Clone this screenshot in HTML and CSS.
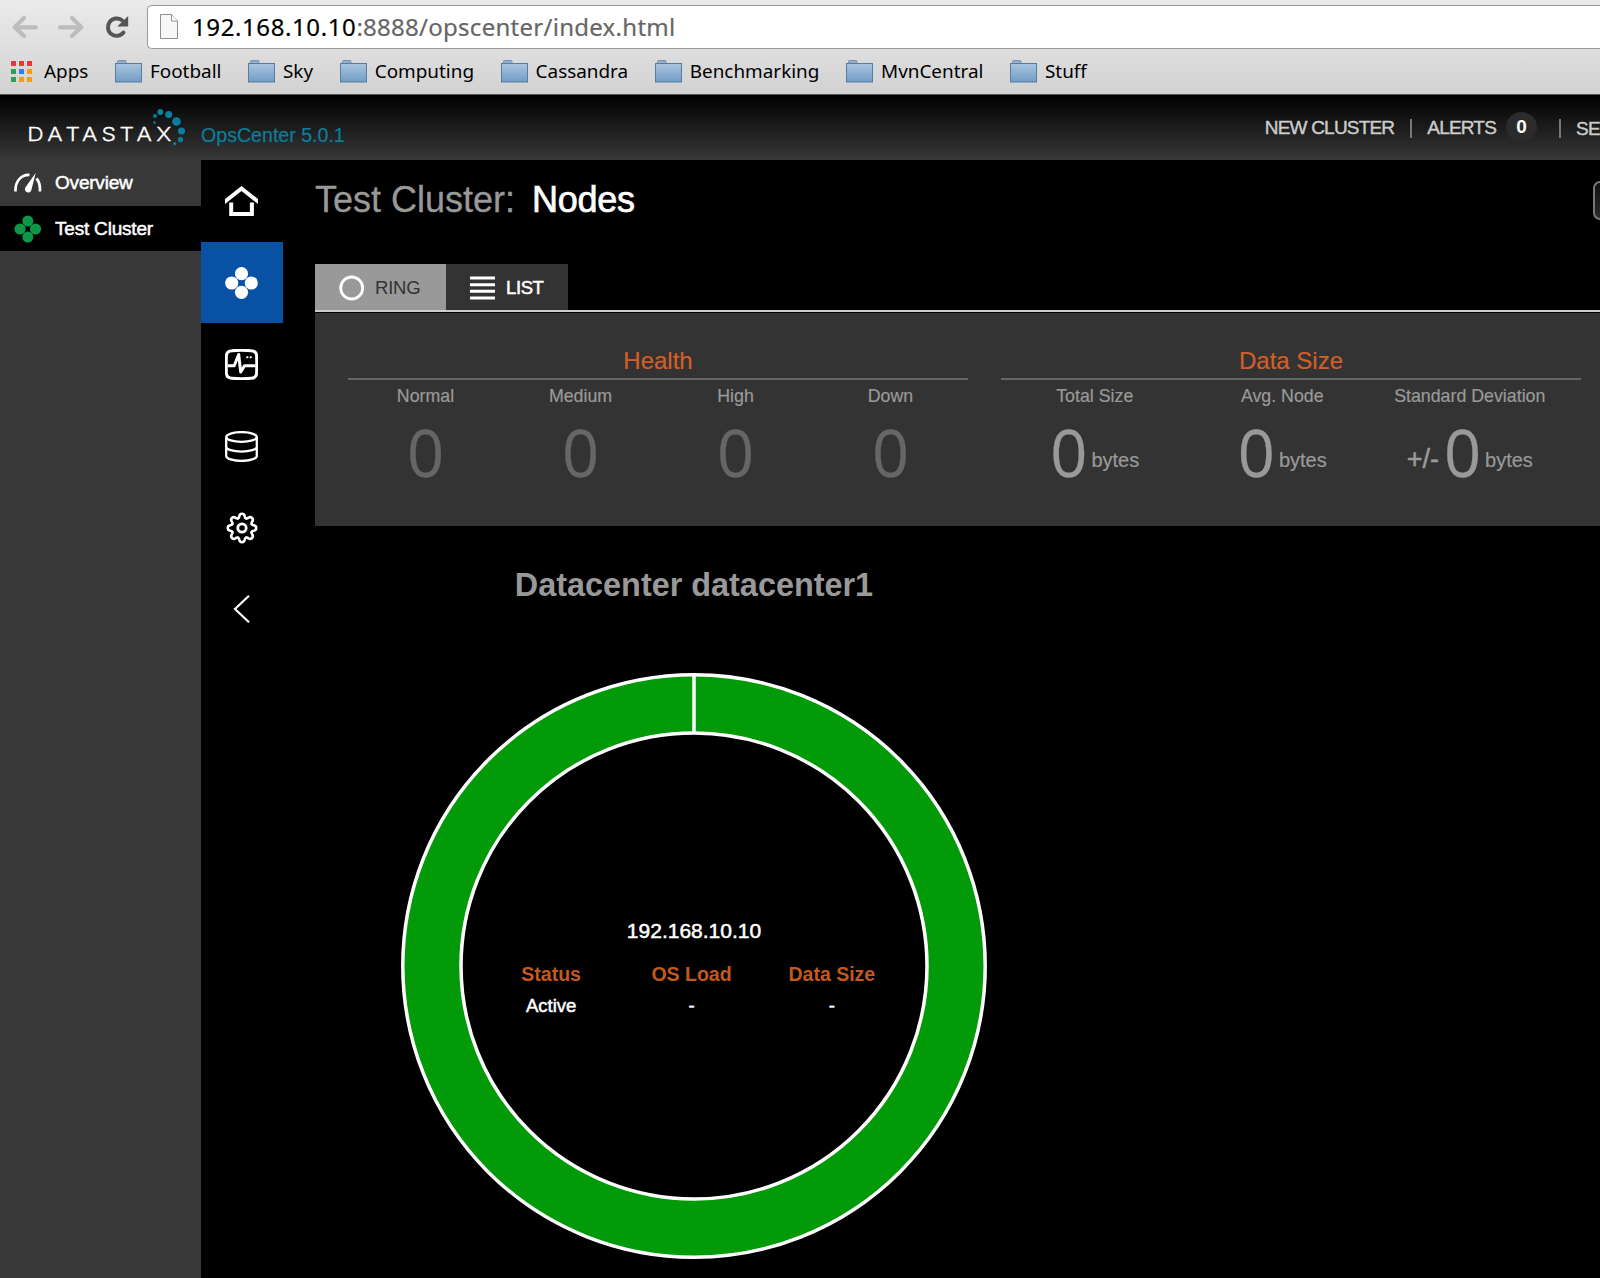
FILE: index.html
```html
<!DOCTYPE html>
<html lang="en">
<head>
    <meta charset="UTF-8">
    <meta name="viewport" content="width=device-width, initial-scale=1.0">
    <title>OpsCenter</title>
    <link rel="stylesheet" href="styles.css">
</head>
<body>
    <svg width="0" height="0" class="defs">
        <defs>
            <linearGradient id="folder-fill" x1="0" y1="0" x2="0" y2="1">
                <stop offset="0" stop-color="#a9c5e0"/>
                <stop offset="1" stop-color="#729cc4"/>
            </linearGradient>
            <symbol id="folder" viewBox="0 0 27 24">
                <path d="M2.500 4V1.500q0-1 1-1h6.500q1 0 1 1V4" fill="#8fb0d2" stroke="#7c92ac"/>
                <rect x=".5" y="3.500" width="26" height="18.500" fill="url(#folder-fill)" stroke="#587c9e"/>
            </symbol>
            <path id="tooth" d="M-4-9.700Q-2.800-10.200-2.700-11.700Q-2.400-14.200 0-14.200Q2.400-14.200 2.700-11.700Q2.800-10.200 4-9.700"/>
        </defs>
    </svg>

    <div class="browser">
        <div class="toolbar">
            <svg class="tool-icons" width="147" height="54" viewBox="0 0 147 54">
                <g fill="none" stroke="#bdbdbd" stroke-width="4.200" stroke-linecap="round" stroke-linejoin="round">
                    <path d="M36 27.300H15M24 18l-9.300 9.300L24 36"/>
                    <path d="M60 27.300h21M72 18l9.300 9.300L72 36"/>
                </g>
                <path d="M123.500 32.500A8.700 8.700 0 1 1 122 20.300" fill="none" stroke="#555" stroke-width="3.900" stroke-linecap="round"/>
                <path d="M128.200 16v10.500h-11z" fill="#555"/>
            </svg>
            <div class="url-box">
                <svg width="20" height="28" viewBox="0 0 20 28">
                    <path d="M1.500 1.500h11l6 6.500v17.500h-17z" fill="#f7f7f7" stroke="#8f8f8f"/>
                    <path d="M12.500 1.500V8h6" fill="#fff" stroke="#8f8f8f"/>
                </svg>
                <p class="url"><b>192.168.10.10</b>:8888/opscenter/index.html</p>
            </div>
        </div>
        <ul class="bookmarks">
            <li class="apps">
                <svg width="22" height="22" viewBox="0 0 22 22">
                    <path d="M0 0h5v5H0zM8 0h5v5H8zM16 0h5v5h-5z" fill="#ee3535"/>
                    <path d="M0 8h5v5H0zM0 16h5v5H0z" fill="#2f9e52"/>
                    <path d="M8 8h5v5H8z" fill="#2185ee"/>
                    <path d="M16 8h5v5h-5zM8 16h5v5H8zM16 16h5v5h-5z" fill="#f29d18"/>
                </svg>
                <span>Apps</span>
            </li>
            <li><svg width="27" height="24"><use href="#folder"/></svg><span>Football</span></li>
            <li><svg width="27" height="24"><use href="#folder"/></svg><span>Sky</span></li>
            <li><svg width="27" height="24"><use href="#folder"/></svg><span>Computing</span></li>
            <li><svg width="27" height="24"><use href="#folder"/></svg><span>Cassandra</span></li>
            <li><svg width="27" height="24"><use href="#folder"/></svg><span>Benchmarking</span></li>
            <li><svg width="27" height="24"><use href="#folder"/></svg><span>MvnCentral</span></li>
            <li><svg width="27" height="24"><use href="#folder"/></svg><span>Stuff</span></li>
        </ul>
    </div>

    <div class="header">
        <svg class="logo" width="201" height="65" viewBox="0 95 201 65">
            <text class="logo-text" transform="scale(1.2 1)" y="141" x="22.800 39.300 54.600 68.300 84.600 99.600 113.800 130.300">DATASTAX</text>
            <g fill="#097f9b">
                <circle cx="154.500" cy="122.500" r="1.300"/>
                <circle cx="155" cy="116" r="1.900"/>
                <circle cx="160.300" cy="112" r="2.900"/>
                <circle cx="168.700" cy="114.500" r="3.500"/>
                <circle cx="176.500" cy="121.500" r="4.300"/>
                <circle cx="181.500" cy="131" r="3.500"/>
                <circle cx="180.500" cy="139.700" r="2.600"/>
                <circle cx="174.700" cy="143.600" r="1.600"/>
            </g>
        </svg>
        <span class="version">OpsCenter 5.0.1</span>
        <div class="menu">
            <span class="new-cluster">NEW CLUSTER</span>
            <i class="sep"></i>
            <span class="alerts">ALERTS</span>
            <b class="badge">0</b>
            <i class="sep"></i>
            <span class="settings">SETTINGS</span>
        </div>
    </div>

    <div class="page">
        <ul class="sidebar">
            <li>
                <svg width="28" height="28" viewBox="0 0 28 28">
                    <path d="M1.500 22.500C1 13 6.500 5.500 15.500 5.800M22.500 9.500c2.800 3.200 3.800 7.500 3.400 13" fill="none" stroke="#fff" stroke-width="2.700"/>
                    <path d="M21.800 3.800L17.500 20.500a3.300 3.300 0 1 1-6-2.200z" fill="#fff"/>
                </svg>
                <span>Overview</span>
            </li>
            <li class="active">
                <svg width="28" height="28" viewBox="0 0 28 28" fill="#109648">
                    <circle cx="13.800" cy="6" r="5.500"/>
                    <circle cx="6" cy="14" r="5.600"/>
                    <circle cx="21.500" cy="14" r="5.600"/>
                    <circle cx="13.800" cy="22" r="5.500"/>
                </svg>
                <span>Test Cluster</span>
            </li>
        </ul>

        <ul class="nav">
            <li class="home">
                <svg width="33" height="31" viewBox="0 0 33 31">
                    <path d="M0 13L16.500 0 33 13v5L16.500 5 0 18z" fill="#fff"/>
                    <path d="M6.200 16.500v11.600h20.700V16.500" fill="none" stroke="#fff" stroke-width="4"/>
                </svg>
            </li>
            <li class="active">
                <svg width="33" height="32" viewBox="0 0 33 32" fill="#fff">
                    <circle cx="16.500" cy="6.700" r="6.600"/>
                    <circle cx="6.700" cy="16" r="6.600"/>
                    <circle cx="26.300" cy="16" r="6.600"/>
                    <circle cx="16.500" cy="25.300" r="6.600"/>
                </svg>
            </li>
            <li>
                <svg width="33" height="31" viewBox="0 0 33 31" fill="none" stroke="#fff" stroke-width="3">
                    <path d="M7 1.700q9.500-.8 19 0 5.300.3 5.600 5 .3 8.800 0 17.600-.3 4.700-5.600 5-9.500.8-19 0-5.300-.3-5.600-5-.3-8.800 0-17.600.3-4.700 5.600-5z"/>
                    <path d="M2.500 16.700h6.700L13.700 5.500l2 17.500 3.800-6.300h11" stroke-linejoin="round"/>
                    <path d="M21.300 8.300h2M24.700 8.300h2" stroke-width="2"/>
                </svg>
            </li>
            <li class="storage">
                <svg width="33" height="31" viewBox="0 0 33 31" fill="none" stroke="#fff" stroke-width="2.300">
                    <ellipse cx="16.500" cy="6" rx="15.300" ry="4.900"/>
                    <path d="M1.200 6v19c0 2.700 6.800 4.900 15.300 4.900s15.300-2.200 15.300-4.900V6M1.200 15.700c0 2.700 6.800 4.900 15.300 4.900s15.300-2.200 15.300-4.900"/>
                </svg>
            </li>
            <li>
                <svg width="33" height="32" viewBox="-17 -16 33 32" fill="none" stroke="#fff" stroke-width="2.600" stroke-linecap="round">
                    <use href="#tooth"/>
                    <use href="#tooth" transform="rotate(45)"/>
                    <use href="#tooth" transform="rotate(90)"/>
                    <use href="#tooth" transform="rotate(135)"/>
                    <use href="#tooth" transform="rotate(180)"/>
                    <use href="#tooth" transform="rotate(225)"/>
                    <use href="#tooth" transform="rotate(270)"/>
                    <use href="#tooth" transform="rotate(315)"/>
                    <circle r="4.200" stroke-width="2.800"/>
                </svg>
            </li>
            <li>
                <svg width="33" height="30" viewBox="0 0 33 30">
                    <path d="M24 1.800L10 15l14 13.200" fill="none" stroke="#fff" stroke-width="2.200"/>
                </svg>
            </li>
        </ul>

        <div class="content">
            <div class="title-row">
                <h1>Test Cluster: <strong>Nodes</strong></h1>
                <span class="action-btn"></span>
            </div>

            <div class="tabs">
                <div class="tab tab-ring">
                    <svg width="26" height="26" viewBox="0 0 26 26"><circle cx="12.700" cy="13" r="11" fill="none" stroke="#fff" stroke-width="2.800"/></svg>
                    <span>RING</span>
                </div>
                <div class="tab tab-list">
                    <svg width="25" height="24" viewBox="0 0 25 24"><path d="M0 2h25M0 8.700h25M0 15.300h25M0 22h25" stroke="#fff" stroke-width="3"/></svg>
                    <span>LIST</span>
                </div>
            </div>

            <div class="stats">
                <div class="group health">
                    <h2>Health</h2>
                    <div class="cols">
                        <div class="col"><p>Normal</p><div class="value"><b>0</b></div></div>
                        <div class="col"><p>Medium</p><div class="value"><b>0</b></div></div>
                        <div class="col"><p>High</p><div class="value"><b>0</b></div></div>
                        <div class="col"><p>Down</p><div class="value"><b>0</b></div></div>
                    </div>
                </div>
                <div class="group data-size">
                    <h2>Data Size</h2>
                    <div class="cols">
                        <div class="col"><p>Total Size</p><div class="value"><b>0</b><span>bytes</span></div></div>
                        <div class="col"><p>Avg. Node</p><div class="value"><b>0</b><span>bytes</span></div></div>
                        <div class="col"><p>Standard Deviation</p><div class="value"><em>+/-</em><b>0</b><span>bytes</span></div></div>
                    </div>
                </div>
            </div>

            <div class="datacenter">
                <h3>Datacenter datacenter1</h3>
                <div class="ring">
                    <svg class="ring-shape" width="586" height="586" viewBox="-293 -293 586 586">
                        <circle r="262" fill="none" stroke="#029a08" stroke-width="58"/>
                        <g fill="none" stroke="#fff" stroke-width="3.500">
                            <circle r="291.200"/>
                            <circle r="233"/>
                            <path d="M0-291v58"/>
                        </g>
                    </svg>
                    <div class="node-info">
                        <p class="node-ip">192.168.10.10</p>
                        <dl>
                            <div><dt>Status</dt><dd>Active</dd></div>
                            <div><dt>OS Load</dt><dd>-</dd></div>
                            <div><dt>Data Size</dt><dd>-</dd></div>
                        </dl>
                    </div>
                </div>
            </div>
        </div>
    </div>
</body>
</html>
```

FILE: styles.css
```css
*{ padding: 0; margin: 0; box-sizing: border-box; }
ul,li{ list-style: none; }
svg{ display: block; flex: none; }

body{
    width: 1600px;
    height: 1278px;
    overflow: hidden;
    background: #000;
    color: #fff;
    font-family: "Liberation Sans", Arial, sans-serif;
    white-space: nowrap;
}
.defs{ position: absolute; }

/* browser chrome */
.browser{
    height: 95px;
    background: linear-gradient(#ebebeb, #d2d2d2);
    border-bottom: 1px solid #555;
    color: #000;
    font-family: "Noto Sans", "Open Sans", sans-serif;
    overflow: hidden;
}
.toolbar{
    display: flex;
    height: 54px;
}
.url-box{
    display: flex;
    align-items: center;
    flex: 1;
    height: 44px;
    margin-top: 5px;
    padding-left: 11px;
    background: #fff;
    border: 1px solid #999;
    border-right: 0;
    border-radius: 5px 0 0 5px;
}
.url{
    margin-left: 13px;
    font-size: 24px;
    line-height: 42px;
    letter-spacing: .27px;
    color: #666;
    -webkit-text-stroke: .2px;
}
.url b{
    font-weight: normal;
    letter-spacing: .6px;
    color: #000;
}
.bookmarks{
    display: flex;
    gap: 26.6px;
    height: 36px;
    padding-left: 11px;
}
.bookmarks li{
    display: flex;
    align-items: center;
    gap: 8px;
    font-size: 18.9px;
}
.bookmarks span{ margin-top: -3px; }
.bookmarks .apps{ gap: 11px; }

/* product header */
.header{
    display: flex;
    height: 65px;
    background: linear-gradient(#000, #383838);
    overflow: hidden;
}
.logo-text{
    font-family: Inter, "Liberation Sans", sans-serif;
    font-size: 19px;
    font-weight: 300;
    fill: #fff;
    stroke: #fff;
    stroke-width: .3px;
}
.version{
    padding-top: 29px;
    font-size: 19.6px;
    line-height: 22px;
    color: #097f9b;
    -webkit-text-stroke: .2px #097f9b;
}
.menu{
    display: flex;
    margin-left: 920px;
    padding-top: 17px;
    font-size: 19px;
    line-height: 30px;
    letter-spacing: -.8px;
    color: #ccc;
}
.menu span{
    padding-top: 1px;
    -webkit-text-stroke: .4px #ccc;
}
.sep{
    width: 2px;
    height: 19px;
    margin: 7px 15px 0 16px;
    background: #777;
}
.badge{
    width: 31px;
    height: 30px;
    margin: 0 6px 0 10px;
    border-radius: 50%;
    background: #2b2b2b;
    color: #fff;
    letter-spacing: 0;
    text-align: center;
}
.menu .settings{ padding-top: 2px; }

.page{
    display: flex;
    height: 1118px;
}
.sidebar{
    width: 201px;
    background: #383838;
}
.sidebar li{
    display: flex;
    align-items: center;
    gap: 13px;
    height: 45px;
    padding-left: 14px;
    font-size: 19px;
    letter-spacing: -.2px;
    -webkit-text-stroke: .5px #fff;
}
.sidebar li:first-child{ height: 46px; }
.sidebar .active{ background: #000; }

.nav{ width: 82px; }
.nav li{
    display: flex;
    align-items: center;
    justify-content: center;
    height: 81.7px;
    padding-right: 2px;
}
.nav .home,.nav .storage{ padding-top: 1px; }
.nav .active{ background: #0951a4; }

.content{
    flex: 1;
    padding-left: 32px;
}
.title-row{
    display: flex;
    justify-content: space-between;
    height: 104px;
    overflow: hidden;
}
h1{
    padding-top: 19px;
    font-size: 36px;
    font-weight: normal;
    line-height: 42px;
    color: #999;
    -webkit-text-stroke: .3px #999;
}
h1 strong{
    margin-left: 7px;
    font-weight: normal;
    letter-spacing: -.3px;
    color: #fff;
    -webkit-text-stroke: .7px #fff;
}
.action-btn{
    width: 7px;
    height: 39px;
    margin-top: 21px;
    border: 2px solid #777;
    border-right: 0;
    border-radius: 7px 0 0 7px;
    background: linear-gradient(#111, #2b2b2b);
}

.tabs{
    display: flex;
    height: 48px;
    border-bottom: 2px solid #ccc;
}
.tab{
    display: flex;
    align-items: center;
    font-size: 18.5px;
    background: #333;
}
.tab-ring{
    gap: 10px;
    width: 131px;
    padding: 2px 0 0 24px;
    background: #999;
    color: #333;
    letter-spacing: -.2px;
}
.tab-list{
    gap: 11px;
    width: 122px;
    padding: 2px 0 0 24px;
    letter-spacing: -.4px;
    -webkit-text-stroke: .5px #fff;
}
.tab span{ margin-top: -1px; }

.stats{
    display: flex;
    gap: 33px;
    height: 213px;
    margin-top: 1px;
    padding: 32px 0 0 33px;
    background: #333;
}
.group h2{
    height: 35px;
    border-bottom: 2px solid #666;
    font-size: 24px;
    font-weight: normal;
    line-height: 31px;
    text-align: center;
    color: #d25f2a;
    -webkit-text-stroke: .2px #d25f2a;
}
.health{ width: 620px; }
.data-size{ width: 580px; }
.cols{ display: flex; }
.col{
    width: 155px;
    text-align: center;
    color: #999;
}
.data-size .col{ width: 187.5px; }
.col p{
    padding-top: 5px;
    font-size: 17.8px;
    line-height: 22px;
    -webkit-text-stroke: .2px #999;
}
.value{
    display: flex;
    align-items: flex-start;
    justify-content: center;
    height: 90px;
}
.value b{
    font-family: "Open Sans", "Noto Sans", sans-serif;
    font-size: 65px;
    font-weight: normal;
    line-height: 90px;
    -webkit-text-stroke: .3px;
}
.value span{
    margin: 42px 0 0 4px;
    font-size: 20px;
    line-height: 22px;
    -webkit-text-stroke: .2px;
}
.value em{
    margin: 37px 5px 0 0;
    font-size: 27px;
    font-style: normal;
    line-height: 30px;
    -webkit-text-stroke: .5px;
}
.health b{ color: #666; }

/* node ring */
.datacenter{
    width: 758px;
    padding-top: 39px;
}
h3{
    font-size: 32.4px;
    line-height: 40px;
    text-align: center;
    color: #999;
}
.ring{
    display: grid;
    justify-items: center;
    margin-top: 68px;
}
.ring-shape,.node-info{ grid-area: 1 / 1; }
.node-info{
    width: 422px;
    padding-top: 245px;
    text-align: center;
}
.node-ip{
    font-size: 21px;
    line-height: 26px;
    -webkit-text-stroke: .5px #fff;
}
.node-info dl{
    display: grid;
    grid-template-columns: repeat(3, 1fr);
    padding-top: 18px;
    margin: 0 3px 0 -2px;
}
dt{
    font-size: 19.5px;
    font-weight: bold;
    line-height: 24px;
    color: #c4591d;
}
dd{
    padding-top: 8px;
    font-size: 18.5px;
    line-height: 24px;
    -webkit-text-stroke: .5px #fff;
}
```
